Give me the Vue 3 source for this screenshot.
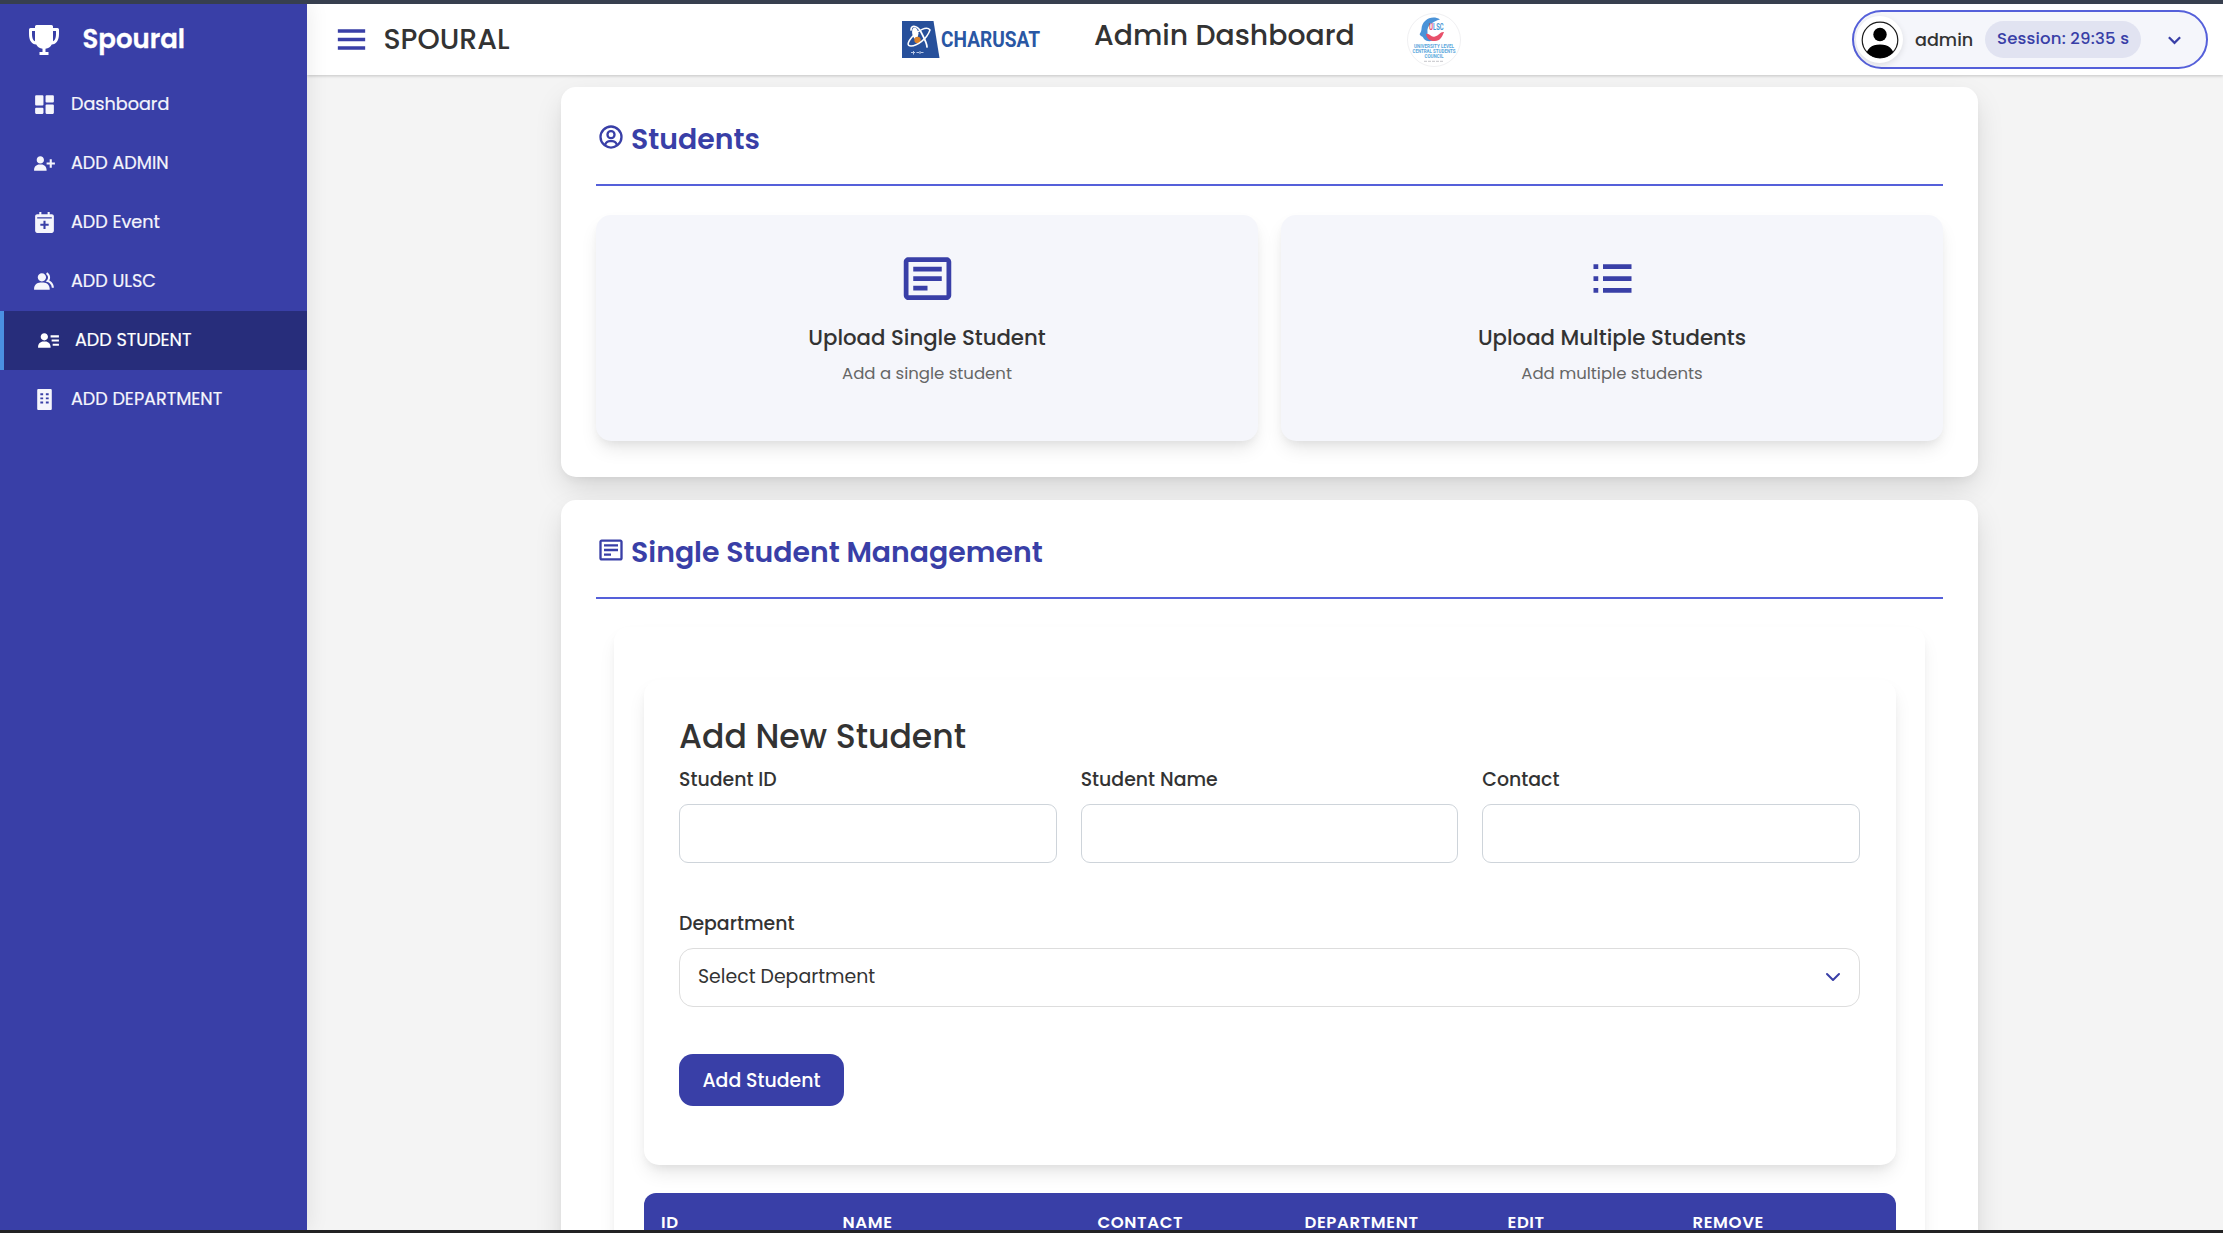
<script setup>
import { ref } from 'vue'

const icons = {
  dashboard: 'M4 13h6a1 1 0 0 0 1-1V4a1 1 0 0 0-1-1H4a1 1 0 0 0-1 1v8a1 1 0 0 0 1 1zm-1 7a1 1 0 0 0 1 1h6a1 1 0 0 0 1-1v-4a1 1 0 0 0-1-1H4a1 1 0 0 0-1 1v4zm10 0a1 1 0 0 0 1 1h6a1 1 0 0 0 1-1v-7a1 1 0 0 0-1-1h-6a1 1 0 0 0-1 1v7zm1-10h6a1 1 0 0 0 1-1V4a1 1 0 0 0-1-1h-6a1 1 0 0 0-1 1v5a1 1 0 0 0 1 1z',
  userPlus: 'M4.5 8.552c0 1.995 1.505 3.5 3.5 3.5s3.5-1.505 3.5-3.5-1.505-3.5-3.5-3.5-3.5 1.505-3.5 3.5zM19 8h-2v3h-3v2h3v3h2v-3h3v-2h-3zM4 19h10v-1c0-2.757-2.243-5-5-5H7c-2.757 0-5 2.243-5 5v1h2z',
  calendar: 'M19 4h-2V2h-2v2H9V2H7v2H5c-1.103 0-2 .897-2 2v14c0 1.103.897 2 2 2h14c1.103 0 2-.897 2-2V6c0-1.103-.897-2-2-2zm-3 11.2h-3v3h-2v-3H8v-2h3v-3h2v3h3v2zm3-7H5V7h14v1.2z',
  group: 'M9.5 12c2.206 0 4-1.794 4-4s-1.794-4-4-4-4 1.794-4 4 1.794 4 4 4zm1.5 1H8c-3.309 0-6 2.691-6 6v1h15v-1c0-3.309-2.691-6-6-6z M16.604 11.048a5.67 5.67 0 0 0 .751-3.44c-.179-1.784-1.175-3.361-2.803-4.44l-1.105 1.666c1.119.742 1.8 1.799 1.918 2.974a3.693 3.693 0 0 1-1.072 2.986l-1.192 1.192 1.618.475C18.951 13.701 19 17.957 19 18h2c0-1.789-.956-5.285-4.396-6.952z',
  userDetail: 'M15 11h7v2h-7zm1 4h6v2h-6zm-2-8h8v2h-8zM4 19h10v-1c0-2.757-2.243-5-5-5H7c-2.757 0-5 2.243-5 5v1h2zm4-7c1.995 0 3.5-1.505 3.5-3.5S9.995 5 8 5 4.5 6.505 4.5 8.5 6.005 12 8 12z',
  building: 'M18 2H6a1 1 0 0 0-1 1v18a1 1 0 0 0 1 1h12a1 1 0 0 0 1-1V3a1 1 0 0 0-1-1zM10.7 15.8H8v-1.8h2.7zm0-4H8V10h2.7zm0-4H8V6h2.7zM16 15.8h-2.7v-1.8H16zm0-4h-2.7V10H16zm0-4h-2.7V6H16z',
  trophy: 'M21 4h-3V3a1 1 0 0 0-1-1H7a1 1 0 0 0-1 1v1H3a1 1 0 0 0-1 1v3c0 4.31 1.8 6.91 4.82 7A6 6 0 0 0 11 17.91V20H9v2h6v-2h-2v-2.09A6 6 0 0 0 17.18 15c3-.1 4.82-2.7 4.82-7V5a1 1 0 0 0-1-1zM4 8V6h2v6.83C4.22 12.08 4 9.3 4 8zm14 4.83V6h2v2c0 1.3-.22 4.08-2 4.83z',
  menu: 'M4 6h16v2H4zm0 5h16v2H4zm0 5h16v2H4z',
  circle: 'M12 2A10.13 10.13 0 0 0 2 12a10 10 0 0 0 4 7.92V20h.1a9.7 9.7 0 0 0 11.8 0h.1v-.08A10 10 0 0 0 22 12 10.13 10.13 0 0 0 12 2zM8.07 18.93A3 3 0 0 1 11 16.57h2a3 3 0 0 1 2.93 2.36 7.75 7.75 0 0 1-7.86 0zm9.54-1.29A5 5 0 0 0 13 14.57h-2a5 5 0 0 0-4.61 3.07A8 8 0 0 1 4 12a8.1 8.1 0 0 1 8-8 8.1 8.1 0 0 1 8 8 8 8 0 0 1-2.39 5.64z M12 6a3.91 3.91 0 0 0-4 4 3.91 3.91 0 0 0 4 4 3.91 3.91 0 0 0 4-4 3.91 3.91 0 0 0-4-4zm0 6a1.91 1.91 0 0 1-2-2 1.91 1.91 0 0 1 2-2 1.91 1.91 0 0 1 2 2 1.91 1.91 0 0 1-2 2z',
  detail: 'M20 3H4c-1.103 0-2 .897-2 2v14c0 1.103.897 2 2 2h16c1.103 0 2-.897 2-2V5c0-1.103-.897-2-2-2zM4 19V5h16l.002 14H4z M6 7h12v2H6zm0 4h12v2H6zm0 4h6v2H6z',
  list: 'M4 6h2v2H4zm0 5h2v2H4zm0 5h2v2H4zM8 6h12v2H8zm0 5h12v2H8zm0 5h12v2H8z',
  chevron: 'M16.293 9.293 12 13.586 7.707 9.293l-1.414 1.414L12 16.414l5.707-5.707z'
}

const nav = [
  { label: 'Dashboard', icon: 'dashboard' },
  { label: 'ADD ADMIN', icon: 'userPlus' },
  { label: 'ADD Event', icon: 'calendar' },
  { label: 'ADD ULSC', icon: 'group' },
  { label: 'ADD STUDENT', icon: 'userDetail', active: true },
  { label: 'ADD DEPARTMENT', icon: 'building' }
]

const actions = [
  { title: 'Upload Single Student', text: 'Add a single student', icon: 'detail' },
  { title: 'Upload Multiple Students', text: 'Add multiple students', icon: 'list' }
]

const fields = ref([
  { label: 'Student ID', value: '' },
  { label: 'Student Name', value: '' },
  { label: 'Contact', value: '' }
])

const columns = ['ID', 'NAME', 'CONTACT', 'DEPARTMENT', 'EDIT', 'REMOVE']
</script>

<template>
  <div class="page">
    <div class="frame-top"></div>
    <div class="shell">
      <aside class="sidebar">
        <div class="brand">
          <svg viewBox="0 0 24 24" width="36" height="36"><path :d="icons.trophy" /></svg>
          <span>Spoural</span>
        </div>
        <nav>
          <a v-for="item in nav" :key="item.label" class="nav-item" :class="{ active: item.active }">
            <svg viewBox="0 0 24 24" width="25" height="25"><path fill-rule="evenodd" :d="icons[item.icon]" /></svg>
            <span>{{ item.label }}</span>
          </a>
        </nav>
      </aside>

      <div class="content">
        <header class="topbar">
          <div class="left">
            <svg class="menu" viewBox="0 0 24 24" width="41" height="41"><path :d="icons.menu" /></svg>
            <span class="app-name">SPOURAL</span>
          </div>
          <div class="center">
            <svg class="uni-logo" viewBox="0 0 142 37" width="142" height="37">
              <path d="M0 0H31.500L37.500 37H0z" fill="#27509b" />
              <path d="M10.500 8c3-3.500 5 0 6 4.500l-1.500 7c-3-1-6-6-4.500-11.500z" fill="#fff" />
              <circle cx="15.500" cy="19" r="3.200" fill="#d9822b" />
              <g fill="none" stroke="#fff" stroke-linecap="round">
                <path d="M28 9C25 5 16 9 10 16c-5 6-5 9-1 9 6 0 16-7 19-16z" stroke-width="1.500" />
                <path d="M9 9c0-6 7-4 10 2 3 6 6 11 6 15" stroke-width="1.700" />
              </g>
              <path d="M9 31.500h4m1.500 0h2.500m1.500 0h3M11.500 30v3.500m6.500-3.500v3" stroke="#b9c8e6" stroke-width="1" />
              <text x="39" y="26.300" class="uni-text" textLength="99" lengthAdjust="spacingAndGlyphs">CHARUSAT</text>
            </svg>
            <h1>Admin Dashboard</h1>
            <svg class="council" viewBox="0 0 54 54" width="54" height="54">
              <circle cx="27" cy="27" r="26.500" fill="#fff" stroke="#f0f0f2" stroke-width="1" />
              <path d="M33 6.500C25 1.500 15 7 14.500 16c-.2 4-2.500 4.500-1.500 6 1.500 2 2.500.5 4 4 3 3 8 2.500 10 .5-5 0-7-3-6.500-7-1-7 5-11 12.500-13z" fill="#4b93d8" />
              <path d="M19 21c4-1 5 4 9 2.500 4-1 5-5 9-4.500-2 5-4 9.500-10 9-4 0-7-2-8-7z" fill="#e8506a" />
              <text x="22" y="17.300" class="council-mark" fill="#e8506a" textLength="4" lengthAdjust="spacingAndGlyphs">U</text>
              <text x="26" y="17.300" class="council-mark" fill="#4b9ad6" textLength="10.500" lengthAdjust="spacingAndGlyphs">LSC</text>
              <text x="27" y="35.300" class="council-text" textLength="40" lengthAdjust="spacingAndGlyphs">UNIVERSITY LEVEL</text>
              <text x="27" y="40" class="council-text" textLength="43" lengthAdjust="spacingAndGlyphs">CENTRAL STUDENTS</text>
              <text x="27" y="44.800" class="council-text" textLength="19" lengthAdjust="spacingAndGlyphs">COUNCIL</text>
              <path d="M17 48.300h20" stroke="#b5b5bb" stroke-width=".8" stroke-dasharray="3 1" />
            </svg>
          </div>
          <div class="account">
            <div class="avatar">
              <svg viewBox="0 0 38 38" width="38" height="38">
                <clipPath id="head"><circle cx="19" cy="19" r="18" /></clipPath>
                <circle cx="19" cy="19" r="17.800" fill="#fff" stroke="#1c1c1c" stroke-width="1.200" />
                <circle cx="19" cy="13.500" r="6.700" />
                <path d="M4 38c1-10 6-14.500 15-14.500S33 28 34 38z" clip-path="url(#head)" />
              </svg>
            </div>
            <span class="user">admin</span>
            <span class="session">Session: 29:35 s</span>
            <svg class="caret" viewBox="0 0 24 24" width="27" height="27"><path :d="icons.chevron" /></svg>
          </div>
        </header>

        <main>
          <section class="card">
            <h2 class="card-title">
              <svg viewBox="0 0 24 24" width="28" height="28"><path fill-rule="evenodd" :d="icons.circle" /></svg>
              <span>Students</span>
            </h2>
            <div class="actions">
              <div v-for="a in actions" :key="a.title" class="action">
                <svg viewBox="0 0 24 24" width="57" height="57"><path :d="icons[a.icon]" /></svg>
                <h3>{{ a.title }}</h3>
                <p>{{ a.text }}</p>
              </div>
            </div>
          </section>

          <section class="card">
            <h2 class="card-title">
              <svg viewBox="0 0 24 24" width="28" height="28"><path :d="icons.detail" /></svg>
              <span>Single Student Management</span>
            </h2>
            <div class="panel">
              <form class="form" @submit.prevent>
                <h2>Add New Student</h2>
                <div class="fields">
                  <label v-for="f in fields" :key="f.label">
                    <span>{{ f.label }}</span>
                    <input v-model="f.value" type="text" />
                  </label>
                </div>
                <div class="department">
                  <span>Department</span>
                  <div class="select">
                    <span>Select Department</span>
                    <svg viewBox="0 0 24 24" width="24" height="24"><path d="M6 9l6 6 6-6" /></svg>
                  </div>
                </div>
                <button type="submit">Add Student</button>
              </form>
              <div class="table-head">
                <span v-for="c in columns" :key="c">{{ c }}</span>
              </div>
            </div>
          </section>
        </main>
      </div>
    </div>
    <div class="frame-bottom"></div>
  </div>
</template>

<style>
body {
  overflow: hidden;
}
</style>

<style scoped>
* {
  box-sizing: border-box;
  margin: 0;
}
.page {
  width: 2223px;
  height: 1233px;
  display: flex;
  flex-direction: column;
  overflow: hidden;
  font-family: Poppins, Inter, "Liberation Sans", sans-serif;
  color: #333;
  background: #f4f4f4;
}
.frame-top {
  height: 4px;
  flex: none;
  background: #373f4f;
}
.frame-bottom {
  height: 3px;
  flex: none;
  background: #222223;
}
svg {
  display: block;
  flex: none;
  fill: currentColor;
}
.shell {
  flex: 1;
  min-height: 0;
  display: flex;
  overflow: hidden;
}
.sidebar {
  width: 307px;
  flex: none;
  position: relative;
  z-index: 3;
  background: #393fa7;
  color: #f5f5fc;
  box-shadow: 2px 0 20px rgba(0, 0, 0, 0.08);
}
.brand {
  height: 71px;
  padding-left: 26px;
  display: flex;
  align-items: center;
  gap: 20.5px;
  color: #fff;
  font-size: 26px;
  font-weight: 600;
  -webkit-text-stroke: 0.3px #fff;
}
.nav-item {
  height: 59px;
  padding-left: 32px;
  display: flex;
  align-items: center;
  gap: 14px;
  font-size: 17.6px;
  -webkit-text-stroke: 0.2px currentColor;
}
.nav-item span {
  padding-bottom: 2px;
}
.nav-item.active {
  background: #272d7b;
  border-left: 4px solid #4a90e2;
  color: #fff;
}
.content {
  flex: 1;
  min-width: 0;
  display: flex;
  flex-direction: column;
}
.topbar {
  height: 71px;
  flex: none;
  display: flex;
  align-items: center;
  position: relative;
  z-index: 2;
  background: #fff;
  box-shadow: 0 1px 3px rgba(0, 0, 0, 0.2);
}
.left {
  width: 594.5px;
  padding-left: 23.5px;
  display: flex;
  align-items: center;
  gap: 12px;
}
.menu {
  color: #393fa7;
}
.app-name {
  font-size: 28.35px;
  font-weight: 500;
}
.center {
  display: flex;
  align-items: center;
}
.uni-logo {
  overflow: visible;
}
.uni-text {
  font: 700 22px Roboto, sans-serif;
  fill: #2a57a4;
}
.center h1 {
  width: 313px;
  margin: 0 0 9px 50.5px;
  font-size: 28.3px;
  font-weight: 500;
  line-height: 34px;
  white-space: nowrap;
}
.council {
  margin-left: -0.5px;
}
.council-mark {
  font: 700 9.5px Roboto, sans-serif;
}
.council-text {
  font: 700 4.6px Roboto, sans-serif;
  fill: #5ba7dc;
  text-anchor: middle;
}
.account {
  width: 356px;
  height: 59px;
  margin-left: auto;
  margin-right: 15px;
  padding-left: 2px;
  display: flex;
  align-items: center;
  background: #f5f6fb;
  border: 2px solid #5560da;
  border-radius: 30px;
}
.avatar {
  width: 47px;
  height: 47px;
  display: flex;
  align-items: center;
  justify-content: center;
  border-radius: 50%;
  background: #fff;
  color: #000;
  box-shadow: 0 2px 6px rgba(0, 0, 0, 0.1);
}
.user {
  width: 70px;
  margin-left: 12px;
  font-size: 17.6px;
  font-weight: 500;
}
.session {
  width: 156px;
  height: 37px;
  padding-left: 12px;
  border-radius: 19px;
  background: #e1e3f1;
  color: #393fa7;
  font-size: 16.54px;
  font-weight: 500;
  line-height: 35px;
  letter-spacing: 0.17px;
  white-space: nowrap;
}
.caret {
  margin-left: 20px;
  color: #393fa7;
}
main {
  flex: 1;
  min-height: 0;
  overflow: hidden;
  padding: 12px 245px 0 254px;
  display: flex;
  flex-direction: column;
  gap: 23px;
}
.card {
  flex: none;
  padding: 0 35px 36px;
  background: #fff;
  border-radius: 15px;
  box-shadow: 0 12px 30px -4px rgba(0, 0, 0, 0.15), 0 4px 8px -2px rgba(0, 0, 0, 0.05);
}
.card-title {
  height: 99px;
  padding: 37px 0 0;
  display: flex;
  align-items: flex-start;
  gap: 6.5px;
  border-bottom: 2px solid #5560da;
  color: #393fa7;
  font-size: 28.35px;
  font-weight: 600;
  line-height: 30px;
}
.card-title svg {
  margin: -1px 0 0 0.5px;
}
.actions {
  margin-top: 29px;
  display: grid;
  grid-template-columns: 1fr 1fr;
  gap: 23px;
}
.action {
  height: 226px;
  padding-top: 34.5px;
  display: flex;
  flex-direction: column;
  align-items: center;
  border-radius: 15px;
  background: #f5f6fb;
  box-shadow: 0 10px 20px -4px rgba(0, 0, 0, 0.11), 0 5px 8px -2px rgba(0, 0, 0, 0.05);
}
.action svg {
  color: #393fa7;
}
.action h3 {
  margin-top: 16px;
  font-size: 21.27px;
  font-weight: 500;
  line-height: 30px;
}
.action p {
  margin-top: 9px;
  color: #666;
  font-size: 16.54px;
  line-height: 24px;
}
.panel {
  margin: 28px 18px 0;
  height: 700px;
  padding: 53px 29px 0 30px;
  border-radius: 15px;
  box-shadow: 0 10px 20px -4px rgba(0, 0, 0, 0.09), 0 5px 8px -2px rgba(0, 0, 0, 0.05);
}
.form {
  height: 485px;
  padding: 35px 36px 0 35px;
  border-radius: 15px;
  background: #fff;
  box-shadow: 0 10px 20px -4px rgba(0, 0, 0, 0.11), 0 5px 8px -2px rgba(0, 0, 0, 0.05);
}
.form h2 {
  font-size: 33.1px;
  font-weight: 500;
  line-height: 44px;
}
.fields {
  margin-top: 9px;
  display: grid;
  grid-template-columns: repeat(3, 1fr);
  gap: 24px;
}
.fields label,
.department {
  display: flex;
  flex-direction: column;
  font-size: 18.9px;
  font-weight: 500;
  line-height: 24px;
}
.fields input {
  width: 100%;
  height: 59px;
  margin-top: 12px;
  padding: 0 16px;
  border: 1px solid #ced4da;
  border-radius: 9px;
  background: #fff;
  font: inherit;
}
.department {
  margin-top: 49px;
}
.select {
  height: 59px;
  margin-top: 12px;
  padding: 0 14px 2px 18px;
  display: flex;
  align-items: center;
  justify-content: space-between;
  border: 1px solid #ddd;
  border-radius: 14px;
  font-size: 18.9px;
  font-weight: 400;
}
.select svg {
  fill: none;
  stroke: #393fa7;
  stroke-width: 2;
  stroke-linecap: round;
  stroke-linejoin: round;
}
.form button {
  width: 165px;
  height: 52px;
  margin-top: 47px;
  padding: 0;
  border: 0;
  border-radius: 14px;
  background: #393fa7;
  color: #fff;
  font-family: inherit;
  font-size: 18.9px;
  font-weight: 500;
}
.table-head {
  height: 59px;
  margin-top: 28px;
  padding-left: 17px;
  display: grid;
  grid-template-columns: 181.5px 255px 207px 203px 185px 1fr;
  align-items: center;
  border-radius: 12px 12px 0 0;
  background: #393fa7;
  color: #fff;
  font-size: 16.54px;
  font-weight: 600;
  letter-spacing: 0.6px;
}
</style>
